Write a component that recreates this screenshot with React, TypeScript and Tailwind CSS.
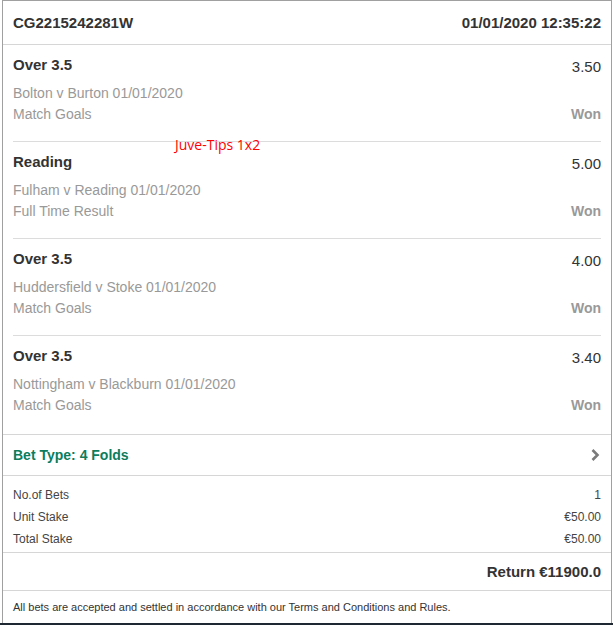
const selections = [
  { pick: "Over 3.5", odds: "3.50", event: "Bolton v Burton 01/01/2020", market: "Match Goals" },
  { pick: "Reading", odds: "5.00", event: "Fulham v Reading 01/01/2020", market: "Full Time Result" },
  { pick: "Over 3.5", odds: "4.00", event: "Huddersfield v Stoke 01/01/2020", market: "Match Goals" },
  { pick: "Over 3.5", odds: "3.40", event: "Nottingham v Blackburn 01/01/2020", market: "Match Goals" },
];

const summary = [
  ["No.of Bets", "1"],
  ["Unit Stake", "€50.00"],
  ["Total Stake", "€50.00"],
];

function Selection({ s, last }: { s: (typeof selections)[number]; last: boolean }) {
  return (
    <div className={`mx-[10px] pt-[10px] ${last ? "pb-[18px]" : "border-b border-[#dcdcdc] pb-[16px]"}`}>
      <div className="flex items-start justify-between">
        <span className="text-[15px] font-bold leading-[20px] text-[#333]">{s.pick}</span>
        <span className="pt-[2px] text-[15px] leading-[20px] text-[#333]">{s.odds}</span>
      </div>
      <div className="mt-[6px] text-[14px] leading-[21px] text-[#999]">{s.event}</div>
      <div className="flex items-center justify-between text-[14px] leading-[21px] text-[#999]">
        <span>{s.market}</span>
        <span className="font-bold">Won</span>
      </div>
    </div>
  );
}

export default function App() {
  return (
    <div className="relative h-[625px] w-[613px] overflow-hidden bg-white font-[family-name:'Liberation_Sans',Arial,sans-serif]">
      <div className="ml-[2px] w-[610px] border-x border-t border-[#a0a0a0]">
        <div className="flex h-[44px] items-center justify-between border-b border-[#d6d6d6] px-[10px] pt-[1px] text-[15px] font-bold text-[#333]">
          <span>CG2215242281W</span>
          <span>01/01/2020 12:35:22</span>
        </div>

        {selections.map((s, i) => (
          <Selection key={i} s={s} last={i === selections.length - 1} />
        ))}

        <div className="flex h-[42px] items-center justify-between border-y border-[#d6d6d6] px-[10px]">
          <span className="text-[14px] font-bold text-[#0b7d5c]">Bet Type: 4 Folds</span>
          <svg width="10" height="14" viewBox="0 0 10 14" className="mr-[1px]">
            <path d="M2.5 2 L7.5 7 L2.5 12" fill="none" stroke="#7a7a7a" strokeWidth="2.6" />
          </svg>
        </div>

        <div className="border-b border-[#d6d6d6] px-[10px] pb-[2px] pt-[8px]">
          {summary.map(([label, value]) => (
            <div key={label} className="flex h-[22px] items-center justify-between text-[12px] text-[#444]">
              <span>{label}</span>
              <span className="text-[#444]">{value}</span>
            </div>
          ))}
        </div>

        <div className="flex h-[38px] items-center justify-end border-b border-[#d6d6d6] px-[10px] pt-[1px] text-[15px] font-bold text-[#333]">
          Return €11900.0
        </div>

        <div className="flex h-[32px] items-center px-[10px] text-[11px] text-[#333]">
          All bets are accepted and settled in accordance with our Terms and Conditions and Rules.
        </div>
      </div>
      <div className="h-[2px] w-full bg-[#1d2833]" />

      <span className="absolute left-[175px] top-[136px] font-[family-name:'Open_Sans',sans-serif] text-[14px] leading-[18px] text-[#f00]">
        Juve-Tips 1x2
      </span>
    </div>
  );
}
